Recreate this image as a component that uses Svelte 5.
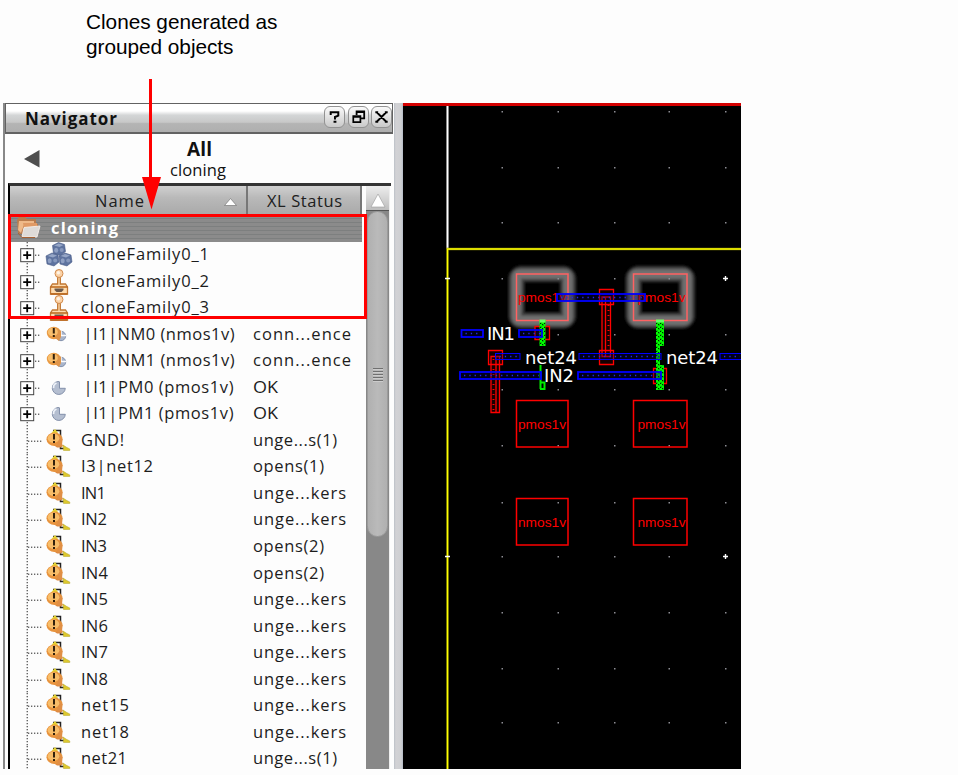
<script>
  const rows = [
    { name: 'cloneFamily0_1', icon: 'cubes', plus: true, w: 128 },
    { name: 'cloneFamily0_2', icon: 'stamp', plus: true, w: 128 },
    { name: 'cloneFamily0_3', icon: 'stamp', plus: true, w: 128 },
    { name: '|I1|NM0 (nmos1v)', icon: 'warn', plus: true, status: 'conn...ence', w: 151, sw: 98 },
    { name: '|I1|NM1 (nmos1v)', icon: 'warn', plus: true, status: 'conn...ence', w: 151, sw: 98 },
    { name: '|I1|PM0 (pmos1v)', icon: 'pie', plus: true, status: 'OK', w: 150, sw: 25 },
    { name: '|I1|PM1 (pmos1v)', icon: 'pie', plus: true, status: 'OK', w: 150, sw: 25 },
    { name: 'GND!', status: 'unge...s(1)', w: 43, sw: 84 },
    { name: 'I3|net12', status: 'opens(1)', w: 72, sw: 71 },
    { name: 'IN1', status: 'unge...kers', w: 25, sw: 93 },
    { name: 'IN2', status: 'unge...kers', w: 26, sw: 93 },
    { name: 'IN3', status: 'opens(2)', w: 26, sw: 71 },
    { name: 'IN4', status: 'opens(2)', w: 27, sw: 71 },
    { name: 'IN5', status: 'unge...kers', w: 27, sw: 93 },
    { name: 'IN6', status: 'unge...kers', w: 27, sw: 93 },
    { name: 'IN7', status: 'unge...kers', w: 27, sw: 93 },
    { name: 'IN8', status: 'unge...kers', w: 27, sw: 93 },
    { name: 'net15', status: 'unge...kers', w: 48, sw: 93 },
    { name: 'net18', status: 'unge...kers', w: 48, sw: 93 },
    { name: 'net21', status: 'unge...s(1)', w: 46, sw: 84 }
  ];
  const gridX = [501.5, 557.5, 614, 668.5, 725];
  const gridY = [111, 167, 222, 278, 334, 389, 445, 502, 556, 612, 668, 722];
  const cells = [
    { x: 516.5, y: 274, w: 51.5, t: 'pmos1v' },
    { x: 633.5, y: 274, w: 53.5, t: 'pmos1v' },
    { x: 516.5, y: 400.5, w: 51.5, t: 'pmos1v' },
    { x: 633.5, y: 400.5, w: 53.5, t: 'pmos1v' },
    { x: 516.5, y: 498.5, w: 51.5, t: 'nmos1v' },
    { x: 633.5, y: 498.5, w: 53.5, t: 'nmos1v' }
  ];
  const wires = [
    [461.5, 483, 330, 7], [519, 542, 330, 7], [557, 645, 294, 7],
    [495.5, 520, 353.5, 6], [579, 661, 353.5, 6], [720, 742, 353.5, 6],
    [460, 541, 372, 7], [578, 661, 372, 7]
  ];
</script>

<div class="page">
  <div class="caption">
    <svg width="220" height="70">
      <text x="0" y="29" textLength="191.500">Clones generated as</text>
      <text x="0" y="54" textLength="147.500">grouped objects</text>
    </svg>
  </div>
  <div class="window">
    <section class="navigator">
      <header class="title">
        <svg width="110" height="26"><text x="0" y="19" textLength="92">Navigator</text></svg>
        <div class="buttons">
          <svg viewBox="0 0 20 20"><path d="M6 8V5H14V8.500L10.500 10V12.500M9 15h3" fill="none" stroke="#000" stroke-width="2.100"/></svg>
          <svg viewBox="0 0 20 20"><path d="M8 8V4H16V11.500H12M8 4.800H16" fill="none" stroke="#000" stroke-width="1.900"/><path d="M4.500 9H12V15.500H4.500ZM4 9.800H12" fill="#ddd" stroke="#000" stroke-width="1.800"/></svg>
          <svg viewBox="0 0 20 20"><path d="M5 5L15 15M15 5L5 15M3.500 5h3M13.500 5h3M3.500 15h3M13.500 15h3" fill="none" stroke="#000" stroke-width="2"/></svg>
        </div>
      </header>
      <div class="scope">
        <svg class="back" width="16" height="18"><path d="M0 9L15.500 0V17.500Z" fill="#4e4e4e"/></svg>
        <div class="where">
          <svg class="all" width="56" height="26"><text x="17" y="22" textLength="25">All</text></svg>
          <svg class="sub" width="58" height="22"><text x="0" y="16" textLength="56">cloning</text></svg>
        </div>
      </div>
      <div class="table">
        <div class="content">
          <div class="head">
            <div class="name"><svg width="160" height="28"><text x="9" y="20.500" textLength="49">Name</text><path d="M138.500 19.500L144.500 12.500L150.500 19.500Z" fill="#fff" stroke="#777" stroke-width=".7"/></svg></div>
            <div class="stat"><svg width="106" height="28"><text x="19" y="20.500" textLength="75">XL Status</text></svg></div>
          </div>
          <div class="root">
            <svg width="28" height="26" viewBox="0 0 28 26">
              <path d="M2 5L4 2H10L12 4H21V9H23V19H6L3 18Z" fill="#b97b4c"/><path d="M4 6H19V10H9L6 18L3 15Z" fill="#efb988"/><path d="M8 8H22V13H9Z" fill="#e09a65"/><path d="M9 12.500L25 11L22 22H7Z" fill="#dedbd8" stroke="#f6eee8" stroke-width=".9"/><path d="M3 18L7 22.500H20" stroke="#a96335" fill="none"/>
            </svg>
            <svg width="100" height="26"><text x="0" y="19" textLength="67">cloning</text></svg>
          </div>
          <div class="tree">
            {#each rows as r}
              <div class="row">
                <svg width="34" height="26.550" viewBox="0 0 34 26.550">
                  <path d="M17.200 0V26.500" stroke="#222" stroke-dasharray="1.300 1.700"/>
                  {#if r.plus}
                    <path d="M25 13.200H31" stroke="#222" stroke-dasharray="1.300 1.700"/>
                    <rect x="10.700" y="6.700" width="13" height="13" fill="#fff" stroke="#444"/>
                    <path d="M13.200 13.200H21.200M17.200 9.200V17.200" stroke="#000" stroke-width="1.800"/>
                  {:else}
                    <path d="M18 13.200H32" stroke="#222" stroke-dasharray="1.300 1.700"/>
                  {/if}
                </svg>
                <svg class="icon" width="28" height="26.550" viewBox="0 0 28 26.550">
                  {#if r.icon === 'cubes'}
                    {#each [[7.5, 0.5], [1, 11], [14, 11]] as [x, y]}
                      <g transform="translate({x} {y})">
                        <path d="M0 3L6 0L12 2L13 9L8 13L1 11Z" fill="#5e739f" stroke="#4a5d88" stroke-width=".6"/>
                        <path d="M1.500 3L6 1L11 2.500L7 4.500Z" fill="#96a6c6"/><ellipse cx="3.700" cy="7.800" rx="2" ry="2.500" fill="#8fa0c3"/><circle cx="9.200" cy="7.500" r="2" fill="#8798bc"/>
                      </g>
                    {/each}
                  {:else if r.icon === 'stamp'}
                    <path d="M12.700 8V15H7.500L5.500 18V25H22.500V18L20.500 15H15.300V8" fill="#ffdcae" stroke="#c17733" stroke-width="1.300"/>
                    <circle cx="14" cy="4.500" r="4" fill="#fbd3a8" stroke="#d08a4c"/><circle cx="13.400" cy="3.700" r="1.700" fill="#fff3e3"/>
                    <path d="M5.500 18H22.500M5.500 25H22.500" stroke="#b9651b" stroke-width="1.300"/><path d="M9.500 19.500H18.500V21L16.500 23H11.500L9.500 21Z" fill="#6b5a4c"/>
                  {:else if r.icon === 'pie'}
                    <path d="M13 6.500A6.500 6.500 0 1 0 20.300 13.300H14.500V6.800Z" fill="#b4bed0" stroke="#8390aa"/><path d="M11.500 8A5 5 0 0 0 8.500 13" stroke="#eef2f9" stroke-width="1.800" fill="none"/>
                  {:else if r.icon === 'warn'}
                    <circle cx="16" cy="14" r="4.700" fill="#a9b5cb" stroke="#8290ab"/>
                    <path d="M16 9V13.500H21" stroke="#fdfdfd" stroke-width="1.500" fill="none"/>
                    <ellipse cx="8.800" cy="11" rx="7" ry="6.200" fill="#e99a43"/><path d="M10 16L14 19L16 15V9L13 7Z" fill="#e0954a"/><ellipse cx="7.800" cy="10" rx="5" ry="4.300" fill="#f8bf6e"/>
                    <path d="M8.800 6V11.500M8.800 13V15" stroke="#32200c" stroke-width="2"/>
                  {:else}
                    <path d="M8 2.500H15.500V9M15.500 17V20.500H20" stroke="#222" stroke-width="1.500" fill="none"/>
                    <path d="M6 5.500L10 1L13 5Z" fill="#e5d332"/>
                    <path d="M7 16H17L18 18L16 19.500H12Z" fill="#dd8a42"/>
                    <ellipse cx="9.500" cy="11.300" rx="8" ry="6.700" fill="#e8943e"/><path d="M14 8L17.500 11L17 18L12 18Z" fill="#e08f45"/><ellipse cx="8.500" cy="10.200" rx="5.800" ry="4.700" fill="#f8bd69"/>
                    <path d="M9 6V11.500M9 13V15" stroke="#32200c" stroke-width="2"/>
                    <path d="M18 17L21.500 19.300L24.800 21V22.500H18.500Z" fill="#dcc82e" stroke="#b5a32a" stroke-width=".5"/>
                  {/if}
                </svg>
                <svg class="label" width="172" height="26.550"><text x={r.name[0] === '|' ? 2.5 : 0} y="18" textLength={r.w}>{r.name}</text></svg>
                <svg class="label" width="106" height="26.550">{#if r.status}<text x="0" y="18" textLength={r.sw} lengthAdjust={r.status === 'OK' ? 'spacingAndGlyphs' : 'spacing'}>{r.status}</text>{/if}</svg>
              </div>
            {/each}
          </div>
        </div>
        <div class="scroll">
          <div class="up"><svg width="16" height="14"><path d="M8 0L15 13H1Z" fill="#fff" stroke="#999" stroke-width=".6"/></svg></div>
          <div class="thumb"><i></i><i></i><i></i><i></i><i></i></div>
        </div>
      </div>
    </section>
    <div class="splitter"></div>
    <svg class="design" width="337.500" height="666" viewBox="403 103 337.500 666">
      <defs>
        <pattern id="via" width="4" height="4" patternUnits="userSpaceOnUse"><rect width="4" height="4" fill="#0c0"/><path d="M0 0H2V2H4V4H2V2H0Z" fill="#0f0"/><path d="M2 0h1v1H2zM0 3h1v1H0z" fill="#020"/></pattern>
        <filter id="soft" x="-20%" y="-20%" width="140%" height="140%"><feGaussianBlur stdDeviation=".8"/></filter>
      </defs>
      <rect x="403" y="103" width="338" height="666" fill="#000"/>
      <rect x="403" y="103" width="338" height="3" fill="#d40000"/>
      <path d="M447.500 106V249" stroke="#888" stroke-width="3"/><path d="M447.500 106V249" stroke="#fff"/>
      <path d="M741 249H447.500V769" fill="none" stroke="#777700" stroke-width="2.600"/><path d="M741 249H447.500V769" fill="none" stroke="#ff0" stroke-width="1.300"/>
      {#each cells.slice(0, 2) as c}
        <g fill="none" filter="url(#soft)">
          <rect x={c.x} y={c.y} width={c.w} height="46.500" rx="5" stroke="#2a2a2a" stroke-width="17"/>
          <rect x={c.x} y={c.y} width={c.w} height="46.500" rx="4" stroke="#4c4c4c" stroke-width="13"/>
          <rect x={c.x} y={c.y} width={c.w} height="46.500" rx="3" stroke="#707070" stroke-width="9"/>
        </g>
      {/each}
      {#each gridY as y}{#each gridX as x}<rect {x} {y} width="1.500" height="1.500" fill="#8d8d94"/>{/each}{/each}
      <path d="M723 278.500H728M725.500 276V281M723 556.500H728M725.500 554V559M445 278.500H450M445 556.500H450" stroke="#fff" stroke-width="1.400"/>
      {#each cells as c, i}
        <rect x={c.x} y={c.y} width={c.w} height="46.500" fill="none" stroke={i < 2 ? '#ff6262' : '#f00'} stroke-width="1.500"/>
        <text class="cell" x={c.x + (c.w > 52 ? 4 : 1.5)} y={c.y + 28} textLength="48" lengthAdjust="spacingAndGlyphs">{c.t}</text>
      {/each}
      <g fill="#150000" stroke="#f00" stroke-width="1.300">
        <path d="M488.500 350.500H502.500V364.500H488.500ZM491 356.500H499.500V412.500H491ZM496 356V412M599.500 289.500H613.500V304.500H599.500ZM599.500 350.500H613.500V364.500H599.500ZM602 297H610.500V356.500H602ZM605.500 297V356M535 326.500H549.500V339.500H535ZM653.500 368.500H666.500V383.500H653.500Z"/>
        <path d="M493.500 359V411M608.500 300V355" stroke-width="2" stroke-dasharray="1 4"/>
      </g>
      <rect x="539.500" y="320" width="6" height="26" fill="url(#via)"/>
      <path d="M540.500 365V389M541 382.500H544.500V389H540" fill="none" stroke="#0e0" stroke-width="2"/>
      <rect x="656" y="320" width="8" height="26" fill="url(#via)"/><rect x="656" y="346" width="4" height="20" fill="url(#via)"/><rect x="656" y="365" width="8" height="25" fill="url(#via)"/>
      <path d="M539.500 321H545.500M656 321H664" stroke="#6f6" stroke-width="3"/>
      {#each wires as [x1, x2, y, h]}
        <rect x={x1} {y} width={x2 - x1} height={h} fill="#00004a" fill-opacity=".35" stroke="#00f" stroke-width={h === 7 ? 1.8 : 1}/>
        <path d="M{x1 + 4} {y + h / 2}H{x2 - 2}" stroke="#2626e8" stroke-width="1.300" stroke-dasharray="1.300 4"/>
      {/each}
      <g class="net">
        <text x="487" y="340" textLength="28">IN1</text>
        <text x="525" y="363.500" textLength="52">net24</text>
        <text x="544" y="382" textLength="30">IN2</text>
        <text x="666" y="363.500" textLength="52">net24</text>
      </g>
    </svg>
  </div>
  <svg class="callout" width="400" height="330">
    <path d="M150.500 79V180" stroke="#f00" stroke-width="3"/><path d="M142 177H161L151.500 209.500Z" fill="#f00"/>
    <rect x="9.500" y="215.500" width="356" height="102" fill="none" stroke="#f00" stroke-width="3"/>
  </svg>
</div>

<style>
  .page { position: relative; width: 958px; height: 775px; overflow: hidden; background: #fdfdfd; font-family: "Open Sans", "Noto Sans", sans-serif; }
  svg { display: block; flex: none; }
  .caption { height: 103px; padding-left: 86px; box-sizing: border-box; }
  .caption text { font: 20.8px "Liberation Sans", sans-serif; }
  .window { display: flex; height: 666px; }
  .navigator { width: 391px; margin-left: 3px; box-sizing: border-box; border-left: 2px solid #888; display: flex; flex-direction: column; background: #fdfdfd; }
  .title { height: 31px; width: 388px; box-sizing: border-box; border: 2px solid #626262; border-width: 1px 1px 2px; background: linear-gradient(#fff 0 25%, #d3d5d6 40%, #c8c8c8 65%, #b4b4b4 70%, #afafaf); display: flex; justify-content: space-between; padding: 2px 0 0 19px; }
  .title text { font-size: 17px; font-weight: 700; fill: #111; }
  .buttons { display: flex; gap: 2.500px; }
  .buttons svg { border: 1px solid #929292; border-radius: 6px; background: linear-gradient(#fafafa, #c9c9c9); box-sizing: border-box; width: 21px; height: 22px; }
  .scope { height: 49px; display: flex; padding-left: 19px; }
  .back { margin-top: 16px; }
  .where { margin-left: 130px; }
  .where svg { overflow: visible; }
  .where text { fill: #111; }
  .all { font-size: 19px; font-weight: 700; }
  .sub { font-size: 16.5px; }
  .table { flex: 1; min-height: 0; display: flex; width: 383px; box-sizing: border-box; margin-left: 3px; border-top: 3px solid #343434; border-left: 2px solid #000; overflow: hidden; }
  .content { width: 352px; flex: none; }
  .head { height: 29px; display: flex; background: linear-gradient(#d0d0d0, #b9b9b9 40%, #a9a9a9); }
  .head text { font-size: 16.5px; fill: #202020; }
  .name { width: 238px; box-sizing: border-box; border-right: 2px solid #777; padding-left: 76px; }
  .stat { width: 114px; box-sizing: border-box; border-right: 2px solid #777; }
  .root { height: 27px; display: flex; background: repeating-linear-gradient(#8b8b8b 0 3px, #7d7f7f 3px 4px); padding-left: 5px; }
  .root > svg:last-child { margin-left: 8px; }
  .root text { font-size: 16.5px; font-weight: 700; fill: #fff; }
  .row { display: flex; height: 26.55px; }
  .icon { margin-left: 1px; margin-right: 8px; }
  .label text { font-size: 16.5px; fill: #1c1c1c; }
  .scroll { width: 24px; flex: none; margin-left: 4px; background: #888; border-right: 1px solid #eee; box-sizing: border-box; display: flex; flex-direction: column; }
  .up { height: 25px; flex: none; background: linear-gradient(#ededed, #bdbdbd); border-bottom: 1px solid #555; box-sizing: border-box; display: flex; justify-content: center; padding-top: 8px; }
  .thumb { height: 326px; box-sizing: border-box; flex: none; margin: 0 1px; border: 1px solid #9b9b9b; border-radius: 12px; background: linear-gradient(90deg, #b0b0b0, #bababa 50%, #b0b0b0); display: flex; flex-direction: column; align-items: center; justify-content: center; gap: 2px; }
  .thumb i { width: 10px; height: 1px; background: #707070; box-shadow: 0 1px #ccc; }
  .splitter { width: 9px; background: linear-gradient(90deg, #bbc0c7, #d2d2d5 20%, #cecfd2 80%, #b3bac6); }
  .cell { font: 13px "Liberation Sans", sans-serif; fill: #f00; }
  .net text { font: 18px "DejaVu Sans", sans-serif; fill: #fff; }
  .callout { position: absolute; left: 0; top: 0; }
</style>
